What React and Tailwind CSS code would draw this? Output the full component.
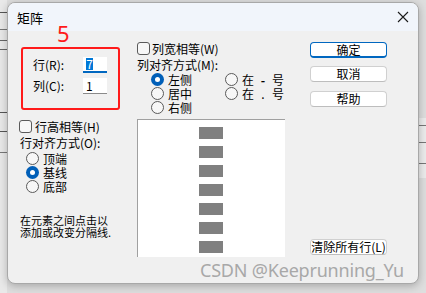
import React from 'react';

const cjk = { fontFamily: '"Noto Sans CJK SC", "Noto Sans", sans-serif' };

const Radio = ({ checked }) => (
  checked ? (
    <span className="flex h-[13px] w-[13px] shrink-0 items-center justify-center rounded-full bg-[#005fb8]">
      <span className="h-[5px] w-[5px] rounded-full bg-white" />
    </span>
  ) : (
    <span className="h-[13px] w-[13px] shrink-0 rounded-full border border-[#5a5a5a] bg-[#f7f7f7]" />
  )
);

const Check = () => (
  <span className="h-[13px] w-[13px] shrink-0 rounded-[3px] border border-[#5a5a5a] bg-[#f7f7f7]" />
);

const RadioRow = ({ checked, children, className = '' }) => (
  <div className={`flex h-[13px] items-center gap-[4px] text-[12px] leading-none text-black ${className}`}>
    <Radio checked={checked} />
    <span>{children}</span>
  </div>
);

const Btn = ({ children, primary, className = '' }) => (
  <div
    className={`flex h-[16px] w-[77px] items-center justify-center rounded-[4px] border bg-white text-[12px] leading-none text-black ${
      primary ? 'border-[#0067c0] border-b-[2px]' : 'border-[#d0d0d0] border-b-[#bdbdbd]'
    } ${className}`}
  >
    {children}
  </div>
);

export default function App() {
  const bars = [0, 1, 2, 3, 4, 5, 6];

  return (
    <div className="relative h-[293px] w-[426px] overflow-hidden bg-[#dedede]" style={cjk}>
      {/* window behind the dialog */}
      <div className="absolute left-0 top-0 h-[293px] w-[7px] bg-[#e9e9e9]">
        <div className="mt-[12px] h-px w-full bg-[#555]" />
        <div className="mt-[16px] h-px w-full bg-[#777]" />
        <div className="mt-[10px] h-[10px] w-full border-y border-[#666]" />
        <div className="mt-[62px] h-px w-full bg-[#555]" />
        <div className="mt-[18px] h-px w-full bg-[#555]" />
        <div className="mt-[20px] h-px w-full bg-[#777]" />
      </div>
      <div className="absolute right-0 top-[118px] h-[60px] w-[8px] bg-[#ececec]">
        <div className="mt-[7px] h-px w-full bg-[#777]" />
        <div className="mt-[16px] h-px w-full bg-[#777]" />
        <div className="mt-[20px] h-px w-full bg-[#777]" />
      </div>

      {/* dialog */}
      <div className="relative ml-[7px] mt-[2px] flex h-[282px] w-[412px] flex-col overflow-hidden rounded-[8px] border border-[#a8a8a8] bg-[#f0f0f0] shadow-[0_2px_8px_rgba(0,0,0,0.25)]">
        <div className="flex h-[28px] shrink-0 items-center justify-between bg-[#f1f5fb] pl-[9px] pr-[8px]">
          <span className="text-[13px] leading-none text-black">矩阵</span>
          <svg width="12" height="12" viewBox="0 0 12 12" className="mr-[1px]">
            <path d="M1 1 L11 11 M11 1 L1 11" stroke="#1b1b1b" strokeWidth="1.1" />
          </svg>
        </div>

        <div className="flex flex-1">
          {/* left column */}
          <div className="flex w-[129px] flex-col pl-[11px]">
            <div className="ml-[2px] mt-[16px] flex h-[63px] w-[99px] flex-col gap-[5px] rounded-[3px] border-2 border-[#ff1a1a] pl-[10px] pt-[8px]">
              <div className="flex h-[16px] items-center">
                <span className="w-[50px] text-[12px] leading-none">行(R):</span>
                <div className="flex h-[16px] w-[24px] items-center border-b-2 border-[#0067c0] bg-white pl-[3px]">
                  <span className="flex h-[12px] w-[7px] items-center justify-center bg-[#0078d7] text-[12px] leading-none text-white">7</span>
                </div>
              </div>
              <div className="flex h-[16px] items-center">
                <span className="w-[50px] text-[12px] leading-none">列(C):</span>
                <div className="flex h-[16px] w-[24px] items-center border-b border-[#8a8a8a] bg-white pl-[3px] text-[12px] leading-none">
                  1
                </div>
              </div>
            </div>

            <div className="mt-[10px] flex h-[13px] items-center gap-[3px] text-[12px] leading-none">
              <Check />
              <span>行高相等(H)</span>
            </div>
            <div className="ml-[1px] mt-[3px] flex h-[14px] items-center text-[12px] leading-none">行对齐方式(O):</div>
            <div className="ml-[7px] mt-[2px] flex flex-col gap-[1px]">
              <RadioRow>顶端</RadioRow>
              <RadioRow checked>基线</RadioRow>
              <RadioRow>底部</RadioRow>
            </div>
            <div className="ml-[1px] mt-[21px] text-[11px] leading-[12px] text-black">
              <div>在元素之间点击以</div>
              <div>添加或改变分隔线.</div>
            </div>
          </div>

          {/* middle column */}
          <div className="flex w-[149px] flex-col">
            <div className="mt-[11px] flex h-[13px] items-center gap-[2px] text-[12px] leading-none">
              <Check />
              <span>列宽相等(W)</span>
            </div>
            <div className="mt-[3px] flex h-[14px] items-center text-[12px] leading-none">列对齐方式(M):</div>
            <div className="mt-[1px] flex pl-[14px]">
              <div className="flex w-[74px] flex-col gap-[1px]">
                <RadioRow checked>左侧</RadioRow>
                <RadioRow>居中</RadioRow>
                <RadioRow>右侧</RadioRow>
              </div>
              <div className="flex flex-col gap-[1px]">
                <RadioRow>
                  <span className="flex">
                    <span>在</span>
                    <span className="w-[18px] text-center font-bold">-</span>
                    <span>号</span>
                  </span>
                </RadioRow>
                <RadioRow>
                  <span className="flex">
                    <span>在</span>
                    <span className="w-[18px] text-center">.</span>
                    <span>号</span>
                  </span>
                </RadioRow>
              </div>
            </div>
            <div className="mt-[5px] flex h-[138px] w-[148px] flex-col gap-[7px] border-l border-t border-[#a0a0a0] bg-white pl-[61px] pt-[7px]">
              {bars.map((b) => (
                <div key={b} className="h-[12px] w-[24px] bg-[#808080]" />
              ))}
            </div>
          </div>

          {/* buttons */}
          <div className="ml-[24px] flex flex-col">
            <Btn primary className="mt-[11px]">确定</Btn>
            <Btn className="mt-[8px]">取消</Btn>
            <Btn className="mt-[9px]">帮助</Btn>
            <Btn className="mt-[132px]">清除所有行(L)</Btn>
          </div>
        </div>
      </div>

      {/* annotation */}
      <span className="absolute left-[57px] top-[22px] text-[22px] leading-none text-[#ff1a1a]" style={{ fontFamily: '"Noto Sans", sans-serif' }}>5</span>

      {/* watermark */}
      <span
        className="absolute left-[200px] top-[261px] whitespace-nowrap text-[18px] leading-none tracking-[-0.2px] text-[#a8a8a8]"
        style={{ fontFamily: '"Noto Sans", sans-serif' }}
      >
        CSDN @Keeprunning_Yu
      </span>
    </div>
  );
}
